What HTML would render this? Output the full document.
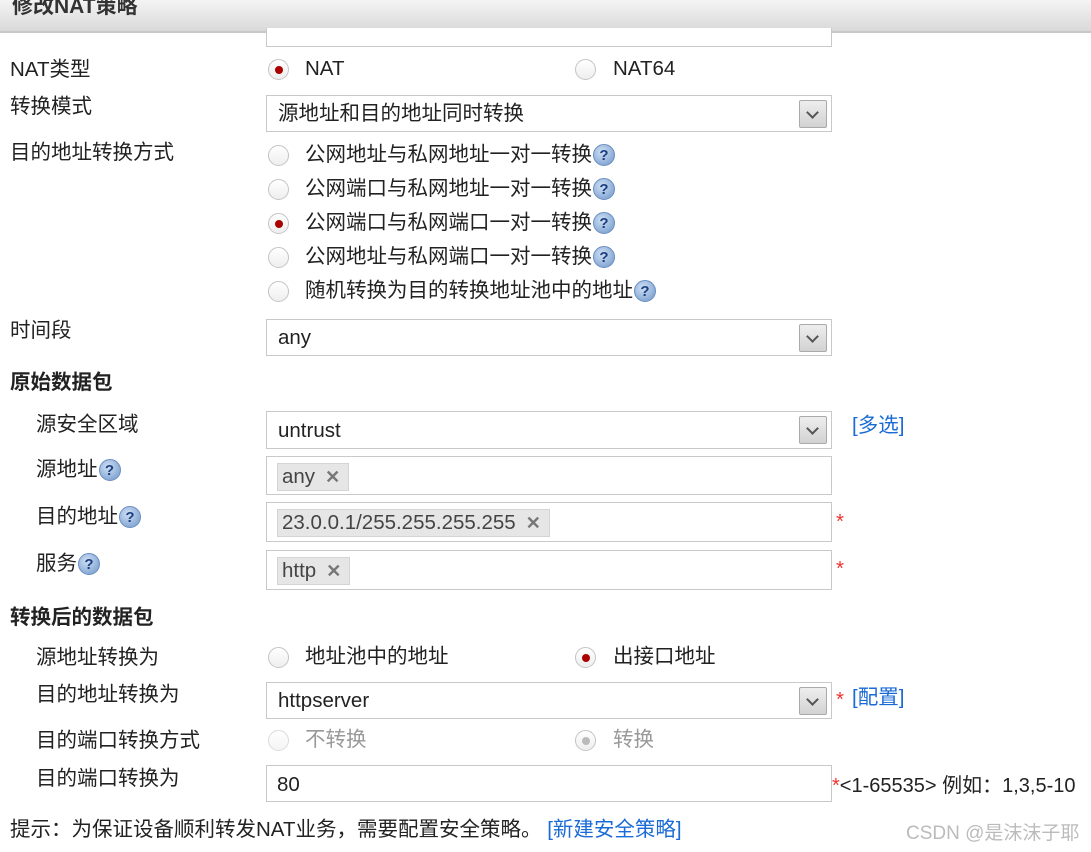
<!DOCTYPE html>
<html><head><meta charset="utf-8"><style>
body{margin:0;width:1091px;height:852px;background:#fff;position:relative;overflow:hidden;font-family:"Liberation Sans","Noto Sans CJK SC",sans-serif;font-size:20.5px;color:#222}
.a{position:absolute;white-space:nowrap;line-height:24px}
.hdr{position:absolute;left:0;top:0;width:1091px;height:31px;background:linear-gradient(#f4f4f4,#d9d9d9);border-bottom:2px solid #c8c8c8}
.box{position:absolute;left:266px;width:564px;border:1px solid #c9c9c9;background:#fff}
.sel .arr{position:absolute;right:4px;top:4px;width:26px;height:26px;border:1px solid #aaa;background:linear-gradient(#eee,#d2d2d2);border-radius:2px}
.sel .arr:after{content:"";position:absolute;left:8px;top:7px;width:7px;height:7px;border-right:2px solid #555;border-bottom:2px solid #555;transform:rotate(45deg)}
.r{position:absolute;width:21px;height:21px;border-radius:50%;border:1px solid #c4c4c4;background:linear-gradient(#fff,#eee);box-sizing:border-box}
.r.on:after{content:"";position:absolute;left:5.5px;top:5.5px;width:8px;height:8px;border-radius:50%;background:#a00}
.r.dis.on:after{background:#bbb}
.q{display:inline-block;width:22px;height:22px;border-radius:50%;background:radial-gradient(circle at 40% 35%,#cfe0f5,#6d95c8);color:#1c3f80;font-size:15px;font-weight:bold;text-align:center;line-height:21px;vertical-align:top;margin-top:1px;border:1px solid #6b8fc2;box-sizing:border-box;margin-left:1px}
.tag{position:absolute;left:10px;top:6px;height:26px;background:#e6e6e6;border:1px solid #d4d4d4;line-height:26px;padding:0 8px 0 4px;color:#444}
.tag b{color:#777;margin-left:10px;font-size:18px}
.b{font-weight:bold}
.lnk{color:#1a6bd6}
.st{color:#e33}
</style></head><body>
<div class="hdr"></div>
<div class="a b" style="left:12px;top:-5px;font-size:21px;color:#333">修改NAT策略</div>
<div class="box" style="top:28px;height:18px;border-top:none"></div>

<div class="a" style="left:10px;top:58px">NAT类型</div>
<div class="r on" style="left:268px;top:59px"></div><div class="a" style="left:305px;top:57px">NAT</div>
<div class="r" style="left:575px;top:59px"></div><div class="a" style="left:613px;top:57px">NAT64</div>

<div class="a" style="left:10px;top:95px">转换模式</div>
<div class="box sel" style="top:95px;height:35px"><div class="a" style="left:11px;top:6px">源地址和目的地址同时转换</div><div class="arr"></div></div>

<div class="a" style="left:10px;top:141px">目的地址转换方式</div>
<div class="r" style="left:268px;top:145px"></div><div class="a" style="left:305px;top:143px">公网地址与私网地址一对一转换<span class="q">?</span></div>
<div class="r" style="left:268px;top:179px"></div><div class="a" style="left:305px;top:177px">公网端口与私网地址一对一转换<span class="q">?</span></div>
<div class="r on" style="left:268px;top:213px"></div><div class="a" style="left:305px;top:211px">公网端口与私网端口一对一转换<span class="q">?</span></div>
<div class="r" style="left:268px;top:247px"></div><div class="a" style="left:305px;top:245px">公网地址与私网端口一对一转换<span class="q">?</span></div>
<div class="r" style="left:268px;top:281px"></div><div class="a" style="left:305px;top:279px">随机转换为目的转换地址池中的地址<span class="q">?</span></div>

<div class="a" style="left:10px;top:319px">时间段</div>
<div class="box sel" style="top:319px;height:35px"><div class="a" style="left:11px;top:6px">any</div><div class="arr"></div></div>

<div class="a b" style="left:10px;top:371px">原始数据包</div>
<div class="a" style="left:36px;top:413px">源安全区域</div>
<div class="box sel" style="top:411px;height:36px"><div class="a" style="left:11px;top:7px">untrust</div><div class="arr"></div></div>
<div class="a lnk" style="left:852px;top:414px">[多选]</div>

<div class="a" style="left:36px;top:458px">源地址<span class="q">?</span></div>
<div class="box" style="top:456px;height:37px"><div class="tag">any<b>✕</b></div></div>
<div class="a" style="left:36px;top:505px">目的地址<span class="q">?</span></div>
<div class="box" style="top:502px;height:38px"><div class="tag">23.0.0.1/255.255.255.255<b>✕</b></div></div>
<div class="a st" style="left:836px;top:510px">*</div>
<div class="a" style="left:36px;top:552px">服务<span class="q">?</span></div>
<div class="box" style="top:550px;height:38px"><div class="tag">http<b>✕</b></div></div>
<div class="a st" style="left:836px;top:557px">*</div>

<div class="a b" style="left:10px;top:606px">转换后的数据包</div>
<div class="a" style="left:36px;top:646px">源地址转换为</div>
<div class="r" style="left:268px;top:647px"></div><div class="a" style="left:305px;top:645px">地址池中的地址</div>
<div class="r on" style="left:575px;top:647px"></div><div class="a" style="left:613px;top:645px">出接口地址</div>

<div class="a" style="left:36px;top:683px">目的地址转换为</div>
<div class="box sel" style="top:682px;height:35px"><div class="a" style="left:11px;top:6px">httpserver</div><div class="arr"></div></div>
<div class="a st" style="left:836px;top:688px">*</div><div class="a lnk" style="left:852px;top:686px">[配置]</div>

<div class="a" style="left:36px;top:729px">目的端口转换方式</div>
<div class="r dis" style="left:268px;top:730px;opacity:.6"></div><div class="a" style="left:305px;top:728px;color:#999">不转换</div>
<div class="r dis on" style="left:575px;top:730px"></div><div class="a" style="left:613px;top:728px;color:#999">转换</div>

<div class="a" style="left:36px;top:767px">目的端口转换为</div>
<div class="box" style="top:765px;height:35px"><div class="a" style="left:10px;top:7px">80</div></div>
<div class="a" style="left:832px;top:774px;font-size:20px"><span class="st">*</span>&lt;1-65535&gt; 例如：1,3,5-10</div>

<div class="a" style="left:10px;top:818px;font-size:20.5px">提示：为保证设备顺利转发NAT业务，需要配置安全策略。 <span class="lnk">[新建安全策略]</span></div>
<div class="a" style="left:906px;top:822px;font-size:19px;color:#bbb">CSDN @是沫沫子耶</div>
</body></html>
